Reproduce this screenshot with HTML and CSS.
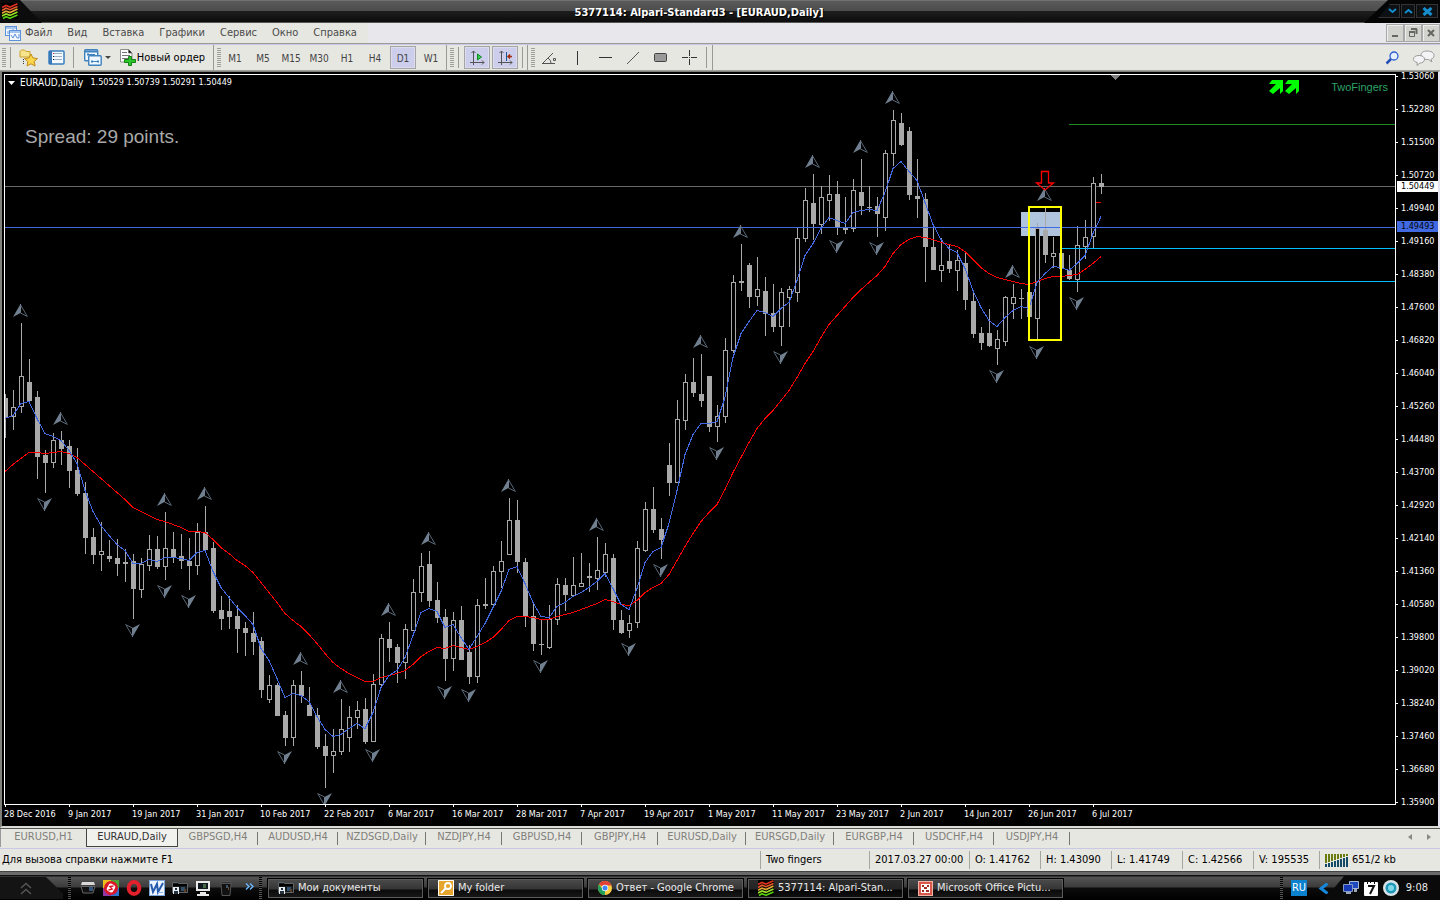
FILE: index.html
```html
<!DOCTYPE html>
<html lang="ru">
<head>
<meta charset="utf-8">
<title>5377114: Alpari-Standard3 - [EURAUD,Daily]</title>
<link rel="stylesheet" href="styles.css">
</head>
<body>
<svg class="defs" aria-hidden="true">
  <defs>
    <symbol id="waves" viewBox="0 0 16 16"><rect width="16" height="16" fill="#000"/><g fill="none" stroke-width="1.7"><path stroke="#d8301c" d="M0 4.500 4 2.500 8 4 15.500.8"/><path stroke="#e8582c" d="M0 7.500 4 5.200 8 6.700 15.500 3.500"/><path stroke="#e0a838" d="M0 10.300 4 8.100 8 9.600 15.500 6"/><path stroke="#9be028" d="M0 13 4 11 8 12.400 15.500 9"/><path stroke="#58d010" d="M1 15.500 4 13.800 8 15.200 15.500 12"/></g></symbol>
    <symbol id="folder" viewBox="0 0 16 14"><path fill="#16191b" stroke="#606466" d="M.5 1.500h5l1 1h9v9H.5z"/><path fill="#000" d="M1 3h14v2H1z"/><rect x="1" y="6" width="6" height="7" fill="#e8edf2"/><path fill="#24303c" d="M3 7h2v2H3zM2 10h4v3H2z"/><path fill="#30506e" d="M9 6h4v4H9z"/><path fill="#5d3d24" d="M12 8h2v3h-2z"/></symbol>
    <symbol id="up" viewBox="0 0 15 13"><path fill="#708090" d="M7.500 0 0 13 7.500 9z"/><path fill="#708090" d="M7 0h1v9H7z"/><path fill="none" stroke="#5a6977" d="M7.500.8 14.300 12.400 7.500 9"/></symbol>
    <symbol id="down" viewBox="0 0 15 13"><path fill="#708090" d="M7.500 13 15 0 7.500 4z"/><path fill="#708090" d="M7 4h1v9H7z"/><path fill="none" stroke="#5a6977" d="M7.500 12.200.7.6 7.500 4"/></symbol>
  </defs>
</svg>

<header class="titlebar">
  <div class="title-logo"><svg width="16" height="16"><use href="#waves"/></svg></div>
  <h1>5377114: Alpari-Standard3 - [EURAUD,Daily]</h1>
  <div class="window-buttons">
    <button aria-label="Свернуть"><svg width="9" height="6"><path d="M1 1 4.500 4 8 1"/></svg></button>
    <button aria-label="Развернуть"><svg width="9" height="6"><path d="M1 5 4.500 2 8 5"/></svg></button>
    <button class="close" aria-label="Закрыть"><svg width="11" height="9"><path d="M1.500 1 9.500 8M9.500 1 1.500 8"/></svg></button>
  </div>
</header>

<nav class="menubar">
  <div class="menus">
    <svg class="menu-icon" width="16" height="15" fill="#f4f8ff" stroke="#5c92dc"><rect x=".5" y=".5" width="11" height="9"/><path d="M.5 2h11M3 5v3M8 3v3"/><rect x="4.500" y="4.500" width="11" height="10"/><path d="M4.500 6h11"/><path fill="none" d="M6 9l2 3 2-4 2 4h2V8"/></svg>
    <button>Файл</button><button>Вид</button><button>Вставка</button><button>Графики</button><button>Сервис</button><button>Окно</button><button>Справка</button>
  </div>
  <div class="mdi-buttons">
    <button aria-label="Свернуть окно"><svg width="10" height="10"><path d="M2 8h6"/></svg></button>
    <button aria-label="Восстановить окно"><svg width="10" height="10"><path d="M3 1h6M8.500 1v5"/><path class="thin" d="M1.500 4.500h5v4h-5z"/><path d="M1 4h6"/></svg></button>
    <button aria-label="Закрыть окно"><svg width="10" height="10"><path d="M2 2 8 8M8 2 2 8"/></svg></button>
  </div>
</nav>

<div class="toolbar">
  <div class="group files">
    <i class="grip"></i><i class="rule"></i>
    <button aria-label="Избранное"><svg width="19" height="18"><path fill="#f7e48c" stroke="#c9a227" d="M1 2.500 2.500 1h3L7 2.500h4V8H1z"/><path stroke="#333" stroke-dasharray="1 1" fill="none" d="M4.500 10v6"/><path fill="#fbd54a" stroke="#c08a17" d="m12 5 2 4 4.500.5-3.300 3 .9 4.500-4.100-2.200L8 17l.8-4.500-3.300-3L10 9z"/></svg></button>
    <button aria-label="Обзор рынка"><svg width="17" height="15"><rect x="1" y="1" width="15" height="13" rx="1" fill="#f4faff" stroke="#3a7fc0" stroke-width="1.500"/><path fill="#3878b6" d="M1 1h3v13H1z"/><path stroke="#9db2c4" d="M6 3.500h8M6 6.500h8M6 9.500h8"/><path stroke="#d33" d="M5 3.500h1"/><path stroke="#222" d="M5 6.500h1M5 9.500h1"/></svg></button>
    <i class="rule"></i>
    <button class="profiles" aria-label="Профили"><svg width="18" height="17"><g fill="#eef7ff" stroke="#3f82bd"><rect x=".7" y=".7" width="13" height="11" rx="1" stroke-width="1.400"/><path d="M1 2.500h12" stroke-width="2"/><rect x="4.700" y="6.700" width="12.500" height="9.500" rx="1" stroke-width="1.400"/><path d="M3 5.500h8M4 4v3M7 12.500h8M8 11v3M14 11v3"/></g></svg><svg width="6" height="4"><path fill="#444" d="M0 0h6L3 3z"/></svg></button>
    <button class="order"><svg width="16" height="17"><path fill="#fff" stroke="#8c8c8c" d="M.5.5h8L12 4v9H.5z"/><path stroke="#777" d="M2 3.500h5M2 6.500h8M2 9.500h8M8.500.5V4H12"/><path fill="#2ec62e" stroke="#128012" d="M8.500 7.500h3v3h4v3h-4v3h-3v-3h-4v-3h4z"/></svg>Новый ордер</button>
  </div>
  <div class="group periods">
    <i class="grip"></i>
    <button>M1</button><button>M5</button><button>M15</button><button>M30</button><button>H1</button><button>H4</button><button class="pressed">D1</button><button>W1</button>
  </div>
  <div class="group shift">
    <i class="grip"></i><i class="rule"></i>
    <button class="pressed" aria-label="Автопрокрутка"><svg width="16" height="16" fill="none" stroke="#555"><path d="M4.500 1v14M1 12.500h14M2.500 3l2-2 2 2M13 10.500l2 2-2 2"/><path fill="#35d04a" stroke="#0c8a24" d="M8.500 4v6l4-3z"/></svg></button>
    <button class="pressed" aria-label="Сдвиг графика"><svg width="16" height="16" fill="none" stroke="#555"><path d="M4.500 1v14M1 12.500h14M2.500 3l2-2 2 2M13 10.500l2 2-2 2"/><path stroke="#145a96" d="M9.500 2v9"/><path stroke="#a22b08" stroke-width="1.500" d="M15 6.500h-4M13 4.500l-2 2 2 2"/></svg></button>
    <i class="rule"></i>
  </div>
  <div class="group draw">
    <i class="grip"></i>
    <button aria-label="Угол"><svg width="16" height="14" fill="none" stroke="#555"><path d="M1 12.500h13M2 12 12 2M7 7q3 2 3 5"/><path d="M12.500 7.500h2v2h-2z"/></svg></button>
    <button aria-label="Вертикальная линия"><svg width="3" height="14"><path stroke="#333" d="M1.500 0v14"/></svg></button>
    <button aria-label="Горизонтальная линия"><svg width="13" height="3"><path stroke="#333" d="M0 1.500h13"/></svg></button>
    <button aria-label="Трендовая линия"><svg width="14" height="14"><path stroke="#555" d="M1 13 13 1"/></svg></button>
    <button aria-label="Прямоугольник"><svg width="14" height="10"><rect x=".5" y=".5" width="12" height="8" rx="1" fill="#999" stroke="#444"/></svg></button>
    <button aria-label="Перекрестие"><svg width="15" height="15"><path stroke="#333" d="M7.500 0v6M7.500 9v6M0 7.500h6M9 7.500h6M7 7.500h1"/></svg></button>
    <i class="rule"></i>
  </div>
  <div class="tools-right">
    <button aria-label="Поиск"><svg width="14" height="14" fill="none"><circle cx="9" cy="5" r="4" fill="#e4efff" stroke="#2e60cc" stroke-width="1.300"/><path stroke="#2450b8" stroke-width="2.500" d="M6 8 1.500 12.500"/></svg></button>
    <button aria-label="Чат"><svg width="22" height="16" fill="#f4f4f6" stroke="#999"><path d="M14 1c4 0 7 1.500 7 4.500 0 2-1 3-3 3.700l1 2.800-3.500-2.500C10 9.700 8 8 8 5.500 8 2.500 10.500 1 14 1z"/><path d="M6 5.500c3.500 0 5.500 1.500 5.500 3.800S9.500 13 7 13l-3 2.500.3-3C2 12 .5 11 .5 9.300c0-2.300 2-3.800 5.500-3.800z"/></svg></button>
  </div>
</div>

<main class="chart">
  <section class="plot">
    <svg class="canvas" id="canvas" role="img" aria-label="EURAUD, Daily"></svg>
    <p class="symbol"><svg width="7" height="4"><path fill="#fff" d="M0 0h7L3.500 4z"/></svg><span class="pair">EURAUD,Daily</span><span>1.50529 1.50739 1.50291 1.50449</span></p>
    <p class="spread">Spread: 29 points.</p>
    <div class="advisor">
      <svg width="31" height="14" fill="#0f0"><path d="M3 0h11v11l-3 3V8l-7 6-4-3 7-7H0z"/><path d="M19 0h11v11l-3 3V8l-7 6-4-3 7-7h-7z"/></svg>
      <span>TwoFingers</span>
    </div>
  </section>
  <aside class="prices" id="prices">
    <b class="tag last">1.50449</b>
    <b class="tag level">1.49493</b>
  </aside>
  <div class="dates" id="dates"></div>
</main>

<nav class="tabs">
  <button class="first">EURUSD,H1</button><button class="daily active">EURAUD,Daily</button><button>GBPSGD,H4</button><button>AUDUSD,H4</button><button class="daily">NZDSGD,Daily</button><button class="jpy">NZDJPY,H4</button><button>GBPUSD,H4</button><button class="jpy">GBPJPY,H4</button><button class="daily">EURUSD,Daily</button><button class="daily">EURSGD,Daily</button><button>EURGBP,H4</button><button>USDCHF,H4</button><button class="jpy">USDJPY,H4</button>
  <div class="tab-scroll">
    <button aria-label="Назад"><svg width="4" height="6"><path d="M4 0v6L0 3z"/></svg></button>
    <button aria-label="Вперёд"><svg width="4" height="6"><path d="M0 0v6l4-3z"/></svg></button>
  </div>
</nav>

<footer class="status">
  <span class="help">Для вызова справки нажмите F1</span>
  <span class="advisor-name">Two fingers</span>
  <span class="time">2017.03.27 00:00</span>
  <span>O: 1.41762</span><span>H: 1.43090</span><span>L: 1.41749</span><span>C: 1.42566</span><span class="volume">V: 195535</span>
  <span class="traffic"><svg width="24" height="14" id="traffic"></svg>651/2 kb</span>
</footer>

<div class="taskbar">
  <button class="start" aria-label="Пуск"><svg width="12" height="13" fill="none" stroke="#555" stroke-width="1.500"><path d="M1 6 6 1.500 11 6M1 12 6 7.500 11 12"/></svg></button>
  <i class="dots"></i>
  <div class="quick">
    <button aria-label="Диск"><svg width="16" height="14"><path fill="#d8d8d8" d="M2 1h12l1 3H1z"/><path fill="#111" stroke="#666" d="M1 5.500h14L13 12H3z"/><path fill="#35567a" d="M9 6h4v4H9z"/></svg></button>
    <button aria-label="Плеер"><svg width="16" height="16"><path fill="#edc11d" d="M0 0h8v8H0z"/><path fill="#48a436" d="M8 0h8v8H8z"/><path fill="#9238a4" d="M0 8h8v8H0z"/><path fill="#2f73d1" d="M8 8h8v8H8z"/><circle cx="8" cy="8" r="7" fill="#d9182a"/><rect x="4.500" y="4" width="7" height="8" rx="2" fill="#fff" transform="rotate(30 8 8)"/><path fill="none" stroke="#d9182a" stroke-width="1.500" d="M10.500 6 7 6.500 9 9 5.500 10"/></svg></button>
    <button aria-label="Opera"><svg width="16" height="16"><ellipse cx="8" cy="8" rx="5.300" ry="6" fill="none" stroke="#e3202c" stroke-width="4"/></svg></button>
    <button aria-label="Word"><svg width="16" height="16"><rect x=".5" y=".5" width="15" height="15" fill="#edf4ff" stroke="#7ba4dc"/><path fill="none" stroke="#2459ad" stroke-width="2" d="M2 4l2 8 4-8 1 8 5-9"/><path stroke="#8fb3e5" d="M9 12.500h5"/></svg></button>
    <button aria-label="Папка"><svg width="16" height="14"><use href="#folder"/></svg></button>
    <button aria-label="Компьютер"><svg width="16" height="15"><path fill="#e9e9e9" d="M1 0h14v10H1zM5 11h6v2h3v2H2v-2h3z"/><path fill="#101820" d="M3 2h10v6H3z"/><path fill="#476844" d="M8 3h3v4H8z"/></svg></button>
    <button aria-label="Корзина"><svg width="16" height="16"><path fill="#111" stroke="#555" d="M3 3.500h10l-1 12H4z"/><path fill="#333" stroke="#555" d="M3 1.500h10v2H3z"/><path fill="#41556a" d="M8 5h2v3H8z"/><path fill="#714a2c" d="M10 7h1v3h-1z"/></svg></button>
  </div>
  <button class="more" aria-label="Ещё"><svg width="9" height="7" fill="none" stroke="#69b8ff" stroke-width="1.400"><path d="M1 .5 4 3.500 1 6.500M5 .5 8 3.500 5 6.500"/></svg></button>
  <i class="dots"></i>
  <div class="tasks">
    <button><svg width="16" height="14"><use href="#folder"/></svg>Мои документы</button>
    <button><svg width="16" height="16"><rect width="16" height="16" rx="1" fill="#e6a52c"/><path fill="none" stroke="#fff" d="M.5.500h15v15H.5z"/><circle cx="10" cy="6" r="3" fill="none" stroke="#fff" stroke-width="1.800"/><path stroke="#fff" stroke-width="2" d="m8 8-5 5"/></svg>My folder</button>
    <button><svg width="14" height="14"><circle cx="7" cy="7" r="7" fill="#ffcd40"/><path fill="#e34133" d="M7 7 1 3.400A7 7 0 0 1 13.500 4.500H7z"/><path fill="#20a05a" d="M1 3.400 5 8.500 7 10v4A7 7 0 0 1 1 3.400z"/><circle cx="7" cy="7" r="3.200" fill="#fff"/><circle cx="7" cy="7" r="2.500" fill="#4285f4"/></svg>Ответ - Google Chrome</button>
    <button class="current"><svg width="16" height="16"><use href="#waves"/></svg>5377114: Alpari-Stan...</button>
    <button><svg width="15" height="15"><rect x=".5" y=".5" width="14" height="14" fill="#d9584c" stroke="#f2b2a8"/><rect x="3" y="3" width="9" height="9" fill="#fff"/><path fill="#a02b20" d="M4 4h2v2H4zM9 4h2v2H9zM6 6h3v2H6zM4 9h2v2H4zM8 9h3v2H8z"/></svg>Microsoft Office Pictu...</button>
  </div>
  <i class="dots"></i>
  <span class="lang">RU</span>
  <div class="tray">
    <button aria-label="Скрытые значки"><svg width="11" height="11" fill="none" stroke="#1687d9" stroke-width="3"><path d="M9.500.5 3 5.500 9.500 10.500"/></svg></button>
    <svg width="16" height="14"><path fill="#1e48bd" stroke="#a5b8d8" d="M6.500.5h9v7h-9z"/><path fill="#1839b5" stroke="#7f98c5" d="M.5 3.500h9v7h-9z"/><path fill="#9ba8bb" d="M3 11h5v2H3zM11 8h3v3h-3z"/></svg>
    <svg width="14" height="15"><rect y="1" width="14" height="14" rx="1" fill="#fff"/><path fill="#111" d="M3 0h1v3H3zM6 0h1v2H6zM10 0h1v3h-1z"/><path fill="none" stroke="#111" stroke-width="2" d="M4 5h6L6 13"/></svg>
    <svg width="16" height="16"><circle cx="8" cy="8" r="8" fill="#d9e4e8"/><circle cx="8" cy="8" r="5.500" fill="#1d98b8"/><circle cx="8" cy="8" r="3" fill="#7fd8ea"/></svg>
    <time>9:08</time>
  </div>
</div>
<script src="chart.js"></script>
</body>
</html>
```
FILE: styles.css
```css
* { box-sizing: border-box; }
body {
  margin: 0; height: 100vh; display: flex; flex-direction: column;
  font: 11px/14px "DejaVu Sans Condensed", "DejaVu Sans", sans-serif;
  background: #e7e7e2; color: #000; overflow: hidden;
}
button { font: inherit; color: inherit; background: none; border: 0; padding: 0; display: flex; align-items: center; justify-content: center; white-space: nowrap; }
p, h1 { margin: 0; }
svg { display: block; flex: none; }
.defs { position: absolute; width: 0; height: 0; }

.titlebar {
  flex: none; height: 23px; display: flex; align-items: stretch; color: #fff;
  background: linear-gradient(#707070 0 1px, #5a5a5a 1px, #4c4c4c 11px, #1e1e1e 11px, #0c0c0c 22px, #555 22px);
}
.title-logo { width: 42px; padding: 3px 2px; background: #0c0c0c; clip-path: polygon(0 0, 20px 0, 42px 100%, 0 100%); }
.titlebar h1 { flex: 1; padding-right: 8px; text-align: center; font-size: 11px; line-height: 25px; font-weight: bold; text-shadow: 1px 1px #000; }
.window-buttons { width: 76px; display: flex; justify-content: flex-end; align-items: flex-start; padding: 4px 2px 0 0; background: #050505; clip-path: polygon(24px 0, 100% 0, 100% 100%, 0 100%); }
.window-buttons button { width: 14px; height: 14px; margin-left: 1px; background: #0d1114; border: 1px solid #333; }
.window-buttons button:first-child { width: 22px; padding-left: 6px; clip-path: polygon(12px 0, 100% 0, 100% 100%, 0 100%); }
.window-buttons .close { width: 22px; }
.window-buttons path { fill: none; stroke: #168ccc; stroke-width: 2; }
.window-buttons .close path { stroke-width: 3; }

.menubar { flex: none; height: 22px; display: flex; justify-content: space-between; background: #e7e7ec; border-bottom: 1px solid #c9c9e6; box-shadow: inset 0 -1px #9b9b9b; }
.menus { display: flex; align-items: center; gap: 15px; padding: 0 11px 0 5px; margin-bottom: 1px; background: #e7e7e2; color: #4b4b4b; }
.menu-icon { margin-right: -11px; }
.mdi-buttons { display: flex; padding-top: 1px; height: 19px; }
.mdi-buttons button { width: 18px; background: #d2d2ce; border: 1px solid #a8a8a8; box-shadow: inset 1px 1px #eee; }
.mdi-buttons path { fill: none; stroke: #666660; stroke-width: 2; }
.mdi-buttons .thin { stroke-width: 1; }

.toolbar { flex: none; height: 26px; display: flex; background: #e7e7e2; border-bottom: 1px solid #a0a09a; color: #444; }
.group { display: flex; align-items: center; border-right: 1px solid #9a9a94; padding: 0 0 0 1px; }
.grip { width: 4px; height: 20px; margin-left: 1px; background: repeating-linear-gradient(#a0a09a 0 1px, transparent 1px 2px); flex: none; }
.rule { width: 1px; height: 21px; background: #9a9a94; margin: 0 4px; flex: none; }
.files { width: 214px; }
.files .rule:nth-child(2) { margin-right: 3px; }
.files button { width: 28px; height: 24px; }
.files .rule:nth-of-type(3) { margin-left: 3px; }
.files .profiles { width: 38px; gap: 3px; }
.files .order { gap: 1px; color: #000; width: 93px; }
.periods { font-size: 10px; padding: 0 0 0 2px; width: 233px; }
.periods button { width: 28px; height: 23px; padding-top: 2px; }
.toolbar .pressed { background: #cdcdec; border: 1px solid #a5a5a5; box-shadow: inset 0 0 0 1px #dcdcf0; }
.periods .pressed { width: 26px; margin: 0 1px; }
.shift .pressed { width: 26px; height: 23px; margin: 0 1px; }
.shift { width: 81px; padding-left: 2px; }
.shift .rule:last-child { margin: 0 0 0 3px; }
.draw { width: 185px; padding-left: 2px; }
.draw button { width: 28px; height: 24px; }
.draw .rule:last-child { margin: 0 0 0 3px; }
.tools-right { margin-left: auto; display: flex; gap: 14px; padding-right: 5px; }

.chart {
  flex: 1; min-height: 0; display: grid; grid-template: minmax(0, 1fr) 21px / 1fr 42px; background: #000; color: #fff;
  font-size: 9px; line-height: 9px; border: solid #80807a; border-width: 1px 0 0 2px; border-right: 2px solid #e4e4f0;
  border-bottom: 2px solid #dcdcd4; padding-left: 2px;
}
.plot { position: relative; margin-top: 2px; border: 1px solid #fff; min-width: 0; min-height: 0; }
.canvas { position: absolute; inset: 0; width: 100%; height: 100%; overflow: hidden; shape-rendering: crispEdges; }
.canvas .smooth { shape-rendering: auto; }
.symbol { position: absolute; left: 3px; top: 3px; display: flex; align-items: center; gap: 5px; }
.pair { font-size: 10px; margin-right: 2px; }
.spread { position: absolute; left: 20px; top: 51px; font: 19px/22px "Liberation Sans", sans-serif; color: #a9a9a9; }
.advisor { position: absolute; right: 7px; top: 5px; display: flex; gap: 31px; font: 11px/14px "Liberation Sans", sans-serif; color: #2ea269; }
.prices { position: relative; min-height: 0; display: flex; flex-direction: column; gap: 24px; padding-left: 5px; }
.price { position: relative; flex: none; }
.price::before { content: ""; position: absolute; left: -5px; top: 4px; width: 2px; height: 1px; background: #fff; }
.tag { position: absolute; left: 1px; right: 0; padding-left: 4px; font-weight: normal; line-height: 11px; }
.last { top: 109px; background: #fff; color: #000; }
.level { top: 149px; background: #4169e1; color: #000; }
.dates { grid-column: 1 / -1; display: flex; }
.date { flex: none; width: 64px; position: relative; padding-top: 5px; white-space: nowrap; }
.date::before { content: ""; position: absolute; left: 1px; top: 0; width: 1px; height: 2px; background: #fff; }

.tabs { flex: none; height: 21px; display: flex; align-items: flex-start; color: #80807a; border-top: 1px solid #555; border-bottom: 1px solid #c9c9e6; padding-bottom: 1px; }
.tabs > button { flex: none; width: 80px; height: 18px; position: relative; padding-bottom: 2px; }
.tabs > button::after { content: ""; position: absolute; right: 0; top: 3px; height: 13px; width: 1px; background: #777770; }
.tabs > .first { width: 86px; border-left: 1px solid #999; }
.tabs > .daily { width: 88px; }
.tabs > .jpy { width: 76px; }
.tabs > .active { width: 92px; background: #f1f1ee; color: #333; border: 1px solid #444; border-top: 0; padding-bottom: 1px; }
.tabs > .first::after, .tabs > .active::after { display: none; }
.tab-scroll { margin-left: auto; display: flex; gap: 15px; padding: 5px 9px 0 0; fill: #8a8a84; }

.status { flex: none; height: 22px; display: flex; align-items: center; }
.status span { flex: none; width: 71px; height: 18px; line-height: 18px; padding-left: 5px; border-left: 1px solid #a6a6a0; white-space: nowrap; }
.status .help { flex: 1; border: 0; padding-left: 2px; }
.status .advisor-name { width: 109px; }
.status .time { width: 100px; }
.status .volume { width: 66px; }
.status .traffic { width: 121px; display: flex; align-items: center; gap: 3px; }

.taskbar {
  flex: none; height: 29px; display: flex; align-items: center; color: #e8e8e8; padding-top: 5px;
  background: linear-gradient(#444 0 1px, #6a6a6a 1px 4px, #111 4px 5px, #555 6px, #3b3b3b 16px, #0c0c0c 17px, #000);
}
.start { width: 63px; height: 22px; padding-right: 12px; background: #141414; clip-path: polygon(0 0, 46px 0, 100% 75%, 100% 100%, 0 100%); }
.dots { width: 3px; height: 22px; margin: 0 5px; flex: none; background: repeating-linear-gradient(#000 0 1px, #555 1px 2px); }
.quick { display: flex; align-items: center; gap: 7px; padding: 0 0 0 4px; }
.more { width: 20px; height: 16px; margin-left: 5px; padding-bottom: 3px; }
.taskbar .more + .dots { margin: 0 5px 0 0; }
.tasks { display: flex; gap: 3px; }
.tasks button { width: 157px; height: 21px; gap: 4px; justify-content: flex-start; padding-left: 10px; border: 1px solid #000; box-shadow: inset 0 0 0 1px #5c5c5c; background: linear-gradient(#4c4c4c, #353535 10px, #0b0b0b 11px, #181818); }
.tasks .current { background: linear-gradient(#2c2c2c, #242424 10px, #050505 11px, #101010); }
.tasks + .dots { margin: 0 8px 0 auto; }
.lang { width: 16px; background: #0b82ce; color: #fff; line-height: 16px; text-align: center; }
.tray { width: 133px; height: 24px; display: flex; align-items: center; gap: 5px; padding-left: 11px; background: linear-gradient(130deg, transparent 28px, #0a0a0a 29px); }
.tray button { margin-right: 9px; }
.tray time { margin-left: auto; padding-right: 12px; }
```
FILE: chart.js
```js
const NS = 'http://www.w3.org/2000/svg';
const STEP = 8, X0 = 5;
const xAt = i => X0 + i * STEP;

// one row per bar: high, body top, body bottom, low, and 1 for a filled body
const bars = `394 398 417 438 1|390 407 417 430 0|323 376 407 413 0|359 382 401 401 1|391 397 457 479 1|450 455 463 493 1|433 440 463 468 0|431 440 449 465 1|440 446 471 488 1|448 470 494 496 1
482 493 538 554 1|528 537 555 564 1|522 551 555 571 0|540 556 559 562 1|539 558 564 576 1|549 562 564 582 1|554 561 589 619 1|558 564 590 598 0|535 549 566 571 0|536 549 567 569 1
512 548 567 580 0|532 549 558 563 1|534 556 561 569 1|538 561 566 590 1|523 532 566 575 0|506 532 550 550 1|542 548 611 613 1|596 610 619 630 1|596 611 617 629 1|605 616 629 653 1
622 628 633 656 1|612 633 642 655 1|637 641 690 698 1|675 685 700 703 0|683 685 716 716 1|711 715 738 746 1|680 685 738 746 0|671 685 696 703 1|687 705 716 716 1|708 715 747 749 1
734 746 756 788 1|729 751 756 773 0|699 729 752 755 0|706 717 738 752 0|701 710 718 729 0|698 709 742 744 1|674 684 742 742 0|634 638 685 687 0|622 639 648 662 1|644 647 663 683 1
624 629 663 679 0|579 592 631 631 0|553 566 593 602 0|551 564 601 607 1|582 600 618 623 1|609 617 659 681 1|612 620 659 671 0|606 620 660 660 1|645 652 677 684 1|599 605 677 683 0
578 604 606 609 1|566 571 605 607 0|541 561 572 588 0|498 520 555 555 0|500 520 562 573 1|558 562 616 627 1|602 616 644 651 1|620 644 645 655 1|605 619 648 649 0|578 584 620 625 0
578 585 595 611 1|557 585 596 596 0|553 583 587 587 0|563 576 578 592 1|537 570 579 590 0|543 554 573 577 0|554 558 620 630 1|610 620 633 634 1|615 623 631 638 0|541 548 623 628 0
502 509 551 552 0|487 509 530 533 1|518 529 540 559 1|443 465 483 496 1|400 419 483 483 0|374 382 421 430 0|358 382 393 397 1|354 394 401 407 1|376 376 427 432 1|405 416 427 442 0
338 350 417 423 0|275 282 351 353 0|244 281 283 291 1|263 265 297 308 1|257 289 297 306 0|277 291 314 336 1|284 313 327 332 1|288 292 327 346 0|286 289 298 327 0|228 238 293 302 0
188 200 239 242 0|174 203 224 240 1|186 197 225 234 0|175 194 201 221 0|181 194 228 235 1|197 228 230 234 1|179 190 229 232 0|159 192 206 215 1|186 207 208 212 1|197 206 214 237 1
150 153 218 231 0|110 120 154 166 0|113 123 145 146 1|127 131 195 200 1|159 196 199 218 1|193 199 247 282 1|228 247 270 270 1|238 265 271 282 0|245 261 269 273 1|250 260 271 291 0
253 263 300 310 1|290 301 334 338 1|327 333 343 350 1|309 333 346 347 1|330 339 349 365 0|296 297 342 346 0|284 297 304 319 0|289 298 299 319 1|292 292 317 317 1|223 228 319 340 0
207 230 255 263 1|237 253 257 268 0|253 253 269 269 1|255 270 279 280 1|226 245 280 292 0|220 237 247 259 0|177 183 237 248 0|174 183 187 194 1`
  .split(/[|\n]/).map(r => r.trim().split(' ').map(Number));

const fast = [418,415,403,401,418,433,436,440,450,463,490,511,525,535,544,550,563,563,559,561,557,557,558,560,552,550,571,587,597,607,615,624,648,660,678,697,693,695,701,716,729,736,734,728,723,728,712,687,675,670,657,635,612,608,611,627,624,637,649,636,623,607,591,569,566,583,602,616,617,606,602,596,592,587,581,573,588,604,609,588,562,551,547,523,490,454,434,423,423,421,397,357,333,321,310,312,316,308,302,280,255,243,228,217,220,223,212,210,209,210,192,168,161,171,180,202,224,239,248,252,268,290,307,320,326,317,310,306,308,282,273,266,267,270,263,255,233,216];
const slow = [471,464,458,452,452,453,452,451,453,457,464,471,478,485,492,499,507,511,515,519,521,524,527,531,531,532,539,547,553,560,565,572,582,592,602,613,620,626,634,643,653,662,668,673,677,681,681,677,675,673,670,664,656,651,647,648,645,647,649,646,642,637,629,620,616,616,617,619,619,616,614,612,609,606,603,599,601,604,605,600,592,587,583,574,560,546,533,521,512,504,489,472,457,442,428,418,410,400,390,377,363,351,337,324,315,306,297,289,282,275,266,253,244,239,236,237,239,242,244,246,251,259,267,273,277,279,281,283,284,281,278,276,276,275,274,269,263,256];

// bar index, top edge
const ups = [[2,304],[7,412],[20,493],[25,487],[37,652],[42,680],[48,603],[53,532],[63,479],[74,518],[87,335],[92,225],[101,155],[107,140],[111,91],[126,265],[130,188]];
const downs = [[5,498],[16,624],[20,585],[23,595],[35,751],[40,793],[46,749],[55,686],[58,689],[67,660],[78,643],[82,564],[89,447],[97,351],[104,240],[109,242],[124,370],[129,346],[134,297]];

function add(parent, name, attrs) {
  const el = document.createElementNS(NS, name);
  for (const k in attrs) el.setAttribute(k, attrs[k]);
  parent.appendChild(el);
  return el;
}
const canvas = document.getElementById('canvas');
const g = add(canvas, 'g', { transform: 'translate(-5 -75)' });
const rect = (x, y, width, height, fill) => add(g, 'rect', { x, y, width, height, fill });

rect(1021, 212, 40, 24, '#b0c4de');
rect(0, 186, '110%', 1, '#696969');
bars.forEach(([h, t, b, l, filled], i) => {
  const x = xAt(i);
  rect(x, h, 1, Math.max(l - h, 1), '#a9a9a9');
  rect(x - 2, t, 5, b - t, '#a9a9a9');
  if (!filled) rect(x - 1, t + 1, 3, b - t - 2, '#000');
});
rect(0, 227, '110%', 1, '#4169e1');
rect(1069, 124, '110%', 1, '#228b22');
rect(1061, 248, '110%', 1, '#00bfff');
rect(1061, 281, '110%', 1, '#00bfff');
const line = (ys, stroke) => add(g, 'polyline', { points: ys.map((y, i) => xAt(i) + ',' + (y + .5)).join(' '), fill: 'none', stroke });
line(slow, '#f00');
line(fast, '#4169e1');
rect(1096, 202, 5, 1, '#f00');
ups.forEach(([i, y]) => add(g, 'use', { href: '#up', x: xAt(i) - 8, y, width: 15, height: 13, class: 'smooth' }));
downs.forEach(([i, y]) => add(g, 'use', { href: '#down', x: xAt(i) - 8, y, width: 15, height: 13, class: 'smooth' }));
add(g, 'path', { d: 'M1041.5 171.500h7v11.500h5l-8.500 7-8.500-7h5z', fill: 'none', stroke: '#f00', 'stroke-width': 1.3, class: 'smooth' });
add(g, 'rect', { x: 1029, y: 207, width: 32, height: 133, fill: 'none', stroke: '#ff0', 'stroke-width': 2 });
add(g, 'path', { d: 'M1111 75h9l-4.500 5z', fill: '#808080' });

const prices = document.getElementById('prices');
for (let i = 0; i <= 22; i++) {
  const d = document.createElement('span');
  d.className = 'price';
  d.textContent = (1.5306 - i * 0.0078).toFixed(5);
  prices.appendChild(d);
}
const dates = document.getElementById('dates');
['28 Dec 2016', '9 Jan 2017', '19 Jan 2017', '31 Jan 2017', '10 Feb 2017', '22 Feb 2017', '6 Mar 2017', '16 Mar 2017', '28 Mar 2017', '7 Apr 2017', '19 Apr 2017', '1 May 2017', '11 May 2017', '23 May 2017', '2 Jun 2017', '14 Jun 2017', '26 Jun 2017', '6 Jul 2017'].forEach(t => {
  const d = document.createElement('span');
  d.className = 'date';
  d.textContent = t;
  dates.appendChild(d);
});

const traffic = document.getElementById('traffic');
for (let i = 0; i < 8; i++) {
  const h = 3 + i;
  add(traffic, 'rect', { x: i * 3, y: 1, width: 2, height: 12 - h, fill: '#6a7c10' });
  add(traffic, 'rect', { x: i * 3, y: 14 - h, width: 2, height: h, fill: '#154a66' });
}
```
